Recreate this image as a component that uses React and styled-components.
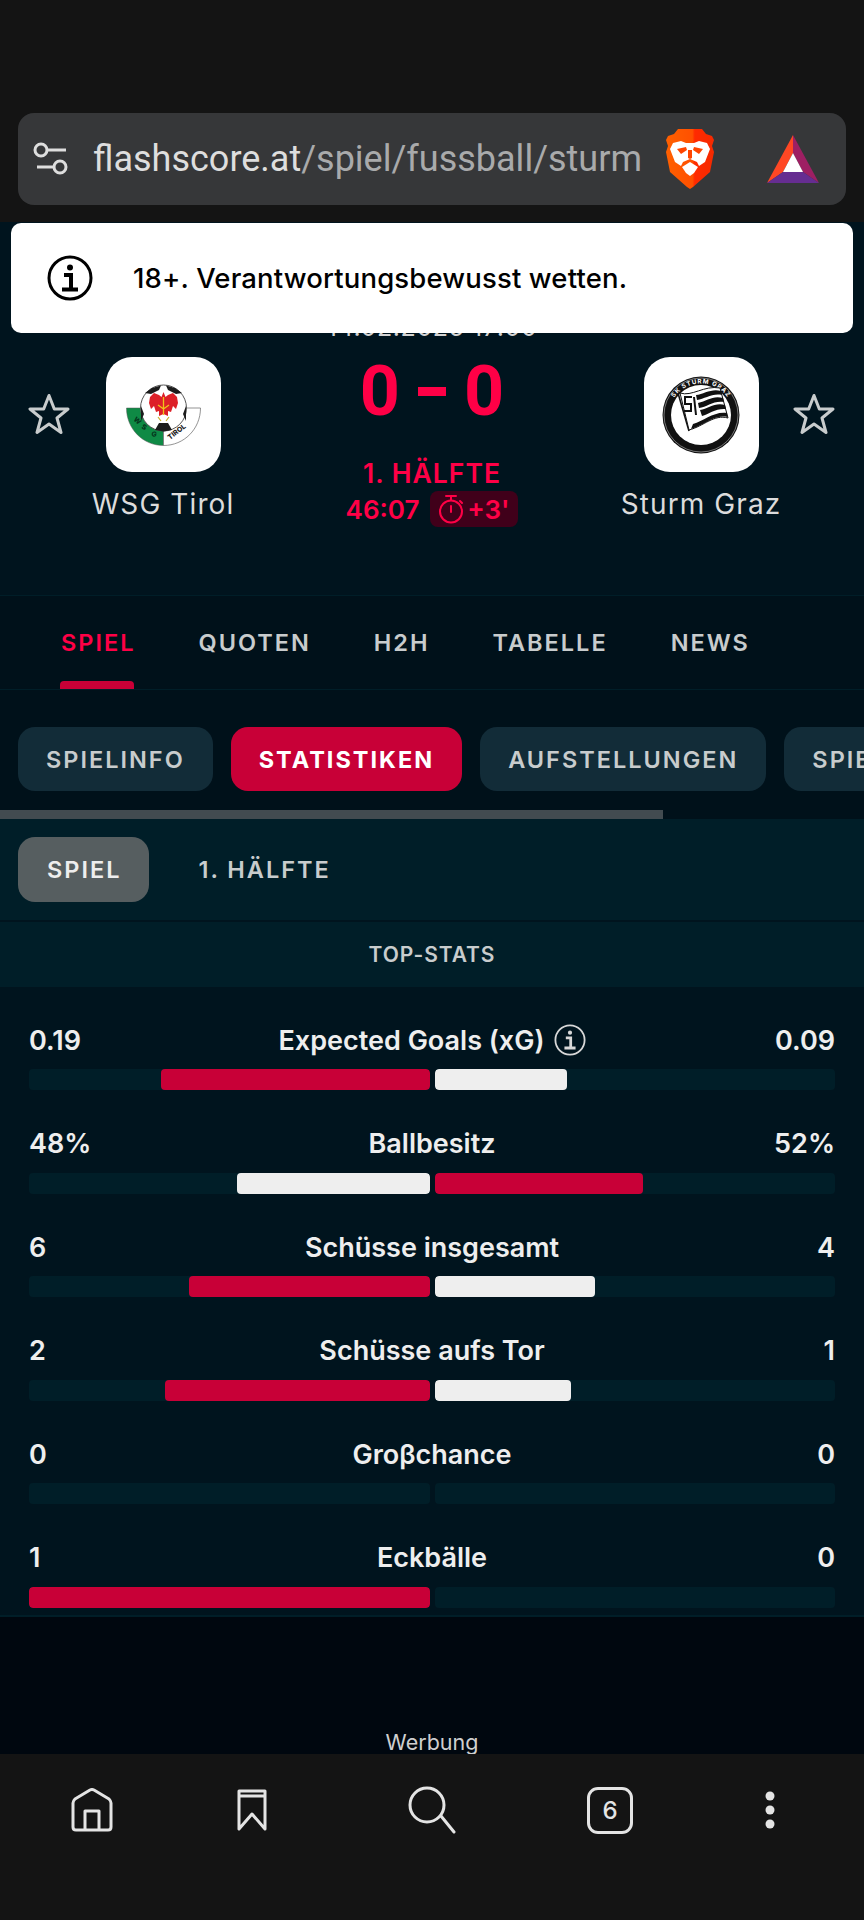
import React from 'react';
import styled, { createGlobalStyle } from 'styled-components';

const GlobalStyle = createGlobalStyle`
  html, body {
    margin: 0;
    padding: 0;
    background: #141414;
  }
  * {
    box-sizing: border-box;
  }
`;

const Screen = styled.div`
  position: relative;
  width: 864px;
  height: 1920px;
  overflow: hidden;
  display: flex;
  flex-direction: column;
  background: #00141e;
  font-family: Inter, "Liberation Sans", sans-serif;
`;

const BrowserTop = styled.header`
  height: 222px;
  flex: none;
  padding: 113px 18px 0;
  background: #141414;
`;

const UrlBar = styled.div`
  height: 92px;
  display: flex;
  align-items: center;
  padding-left: 15px;
  border-radius: 16px;
  background: #363739;
`;

const UrlText = styled.div`
  width: 548px;
  margin-left: 24px;
  overflow: hidden;
  white-space: nowrap;
  font-family: Roboto, sans-serif;
  font-size: 36px;
  color: #a9aaab;
  span {
    color: #dedede;
  }
`;

const Shield = styled.svg`
  margin-left: 25px;
  flex: none;
`;

const Triangle = styled.svg`
  margin-left: 53px;
  flex: none;
`;

const Banner = styled.div`
  position: absolute;
  top: 223px;
  left: 11px;
  width: 842px;
  height: 110px;
  display: flex;
  align-items: center;
  padding-left: 36px;
  gap: 40px;
  border-radius: 10px;
  background: #fff;
  font-size: 27.5px;
  font-weight: 500;
  letter-spacing: 0.15px;
  color: #000;
`;

const MatchHeader = styled.section`
  height: 373px;
  flex: none;
  padding-top: 96px;
`;

const DateLine = styled.div`
  height: 18px;
  line-height: 18px;
  text-align: center;
  font-size: 25px;
  letter-spacing: 0.6px;
  color: #d4d4d4;
`;

const Teams = styled.div`
  display: flex;
  align-items: flex-start;
  margin-top: 21px;
  padding: 0 29px 0 28px;
`;

const StarIcon = styled.svg`
  flex: none;
  margin-top: 36px;
`;

const Team = styled.div`
  width: 160px;
  flex: none;
  margin: ${(p) => (p.$right ? '0 12px 0 0' : '0 0 0 13px')};
  display: flex;
  flex-direction: column;
  align-items: center;
`;

const LogoBox = styled.div`
  width: 115px;
  height: 115px;
  display: flex;
  align-items: center;
  justify-content: center;
  border-radius: 26px;
  background: #fff;
`;

const TeamName = styled.div`
  margin-top: 16px;
  font-size: 28px;
  line-height: 32px;
  letter-spacing: 1.1px;
  white-space: nowrap;
  color: #dcdcdc;
`;

const Center = styled.div`
  flex: 1;
  display: flex;
  flex-direction: column;
  align-items: center;
  color: #ff0046;
`;

const Score = styled.div`
  height: 50px;
  margin-top: 9px;
  display: flex;
  align-items: center;
  gap: 18px;
  font-family: Roboto, sans-serif;
  font-size: 70px;
  font-weight: 700;
  line-height: 50px;
`;

const Dash = styled.span`
  width: 28px;
  height: 9px;
  background: #ff0046;
`;

const Phase = styled.div`
  margin-top: 41px;
  font-size: 26.5px;
  line-height: 32px;
  font-weight: 600;
  letter-spacing: 1px;
`;

const Clock = styled.div`
  margin-top: 2px;
  display: flex;
  align-items: center;
  gap: 11px;
  font-size: 26px;
  font-weight: 600;
`;

const Added = styled.div`
  width: 88px;
  height: 36px;
  display: flex;
  align-items: center;
  justify-content: center;
  gap: 3px;
  border-radius: 8px;
  background: #40001a;
`;

const MatchTabs = styled.nav`
  height: 95px;
  flex: none;
  display: flex;
  gap: 63px;
  padding-left: 61px;
  border-top: 1px solid #001e28;
  border-bottom: 1px solid #001e28;
  background: #00111a;
`;

const MatchTab = styled.div`
  position: relative;
  display: flex;
  align-items: center;
  font-size: 23.5px;
  font-weight: 600;
  letter-spacing: 2px;
  color: ${(p) => (p.$active ? '#ff0046' : '#c8cccd')};
  &::after {
    content: '';
    display: ${(p) => (p.$active ? 'block' : 'none')};
    position: absolute;
    left: -1px;
    right: 1px;
    bottom: 0;
    height: 8px;
    border-radius: 4px 4px 0 0;
    background: #c80037;
  }
`;

const PillSection = styled.div`
  height: 120px;
  flex: none;
  display: flex;
  gap: 18px;
  padding: 37px 0 0 18px;
  overflow: hidden;
  background: #00111a;
`;

const Pill = styled.div`
  height: 64px;
  flex: none;
  display: flex;
  align-items: center;
  padding: 0 28px;
  border-radius: 17px;
  font-size: 23.5px;
  font-weight: ${(p) => (p.$active ? 700 : 600)};
  letter-spacing: 2px;
  color: ${(p) => (p.$active ? '#fff' : '#c8cccd')};
  background: ${(p) => (p.$active ? '#c80037' : '#122c38')};
`;

const ScrollTrack = styled.div`
  height: 9px;
  flex: none;
  background: #00111a;
`;

const ScrollThumb = styled.div`
  width: 663px;
  height: 100%;
  background: #424b50;
`;

const SubTabs = styled.div`
  height: 103px;
  flex: none;
  display: flex;
  align-items: flex-start;
  padding: 18px 0 0 18px;
  border-bottom: 2px solid #00141e;
  background: #001e28;
`;

const SubTab = styled.div`
  height: 65px;
  display: flex;
  align-items: center;
  padding: 0 28px 0 29px;
  margin-right: 20px;
  border-radius: 17px;
  font-size: 23.5px;
  font-weight: 600;
  letter-spacing: 2px;
  color: ${(p) => (p.$active ? '#eeeeee' : '#c8cccd')};
  background: ${(p) => (p.$active ? '#565e60' : 'transparent')};
`;

const StatsHeading = styled.div`
  height: 65px;
  flex: none;
  display: flex;
  align-items: center;
  justify-content: center;
  font-size: 21px;
  font-weight: 600;
  letter-spacing: 0.9px;
  color: #c8cccd;
  background: #001e28;
`;

const StatsList = styled.div`
  height: 630px;
  flex: none;
  padding: 33px 29px 0;
  border-bottom: 2px solid #001e28;
`;

const StatRow = styled.div`
  height: 103.5px;
`;

const StatLabels = styled.div`
  height: 40px;
  display: grid;
  grid-template-columns: 1fr auto 1fr;
  align-items: center;
  font-size: 27px;
  font-weight: 600;
  color: #eeeeee;
`;

const StatTitle = styled.div`
  display: flex;
  align-items: center;
  gap: 9px;
`;

const StatRight = styled.div`
  text-align: right;
`;

const Bars = styled.div`
  height: 21px;
  margin-top: 9px;
  display: flex;
  gap: 5px;
`;

const Track = styled.div`
  flex: 1;
  display: flex;
  justify-content: ${(p) => (p.$left ? 'flex-end' : 'flex-start')};
  border-radius: 4px;
  overflow: hidden;
  background: #001e28;
`;

const Fill = styled.div`
  height: 100%;
  border-radius: 4px;
  background: ${(p) => (p.$lead ? '#c80037' : '#eeeeee')};
`;

const AdSlot = styled.div`
  flex: 1;
  display: flex;
  align-items: flex-end;
  justify-content: center;
  font-size: 21.5px;
  line-height: 24px;
  color: #cfcfcf;
  background: #00070f;
`;

const BottomBar = styled.footer`
  height: 166px;
  flex: none;
  display: grid;
  grid-template-columns: 184px 136px 224px 132px 188px;
  grid-template-rows: 112px;
  align-items: center;
  justify-items: center;
  background: #141414;
`;

const TabCount = styled.div`
  width: 46px;
  height: 47px;
  display: flex;
  align-items: center;
  justify-content: center;
  border: 3px solid #e4e4e4;
  border-radius: 11px;
  font-size: 24px;
  font-weight: 500;
  color: #e4e4e4;
`;

const stats = [
  { title: 'Expected Goals (xG)', left: '0.19', right: '0.09', lw: 67, rw: 33, info: true, leftLeads: true },
  { title: 'Ballbesitz', left: '48%', right: '52%', lw: 48, rw: 52, leftLeads: false },
  { title: 'Schüsse insgesamt', left: '6', right: '4', lw: 60, rw: 40, leftLeads: true },
  { title: 'Schüsse aufs Tor', left: '2', right: '1', lw: 66, rw: 34, leftLeads: true },
  { title: 'Groβchance', left: '0', right: '0', lw: 0, rw: 0, leftLeads: true },
  { title: 'Eckbälle', left: '1', right: '0', lw: 100, rw: 0, leftLeads: true },
];

const FilterIcon = () => (
  <svg width="36" height="34" viewBox="0 0 36 34" fill="none" stroke="#dedede" strokeWidth="3">
    <circle cx="8" cy="8" r="6" />
    <path d="M14 8h19M4 25h17" />
    <circle cx="27" cy="25" r="6" />
  </svg>
);

const BraveLogo = () => (
  <Shield width="48" height="60" viewBox="0 0 48 60">
    <defs>
      <linearGradient id="braveFill" x1="0" x2="1" y1="0" y2="0">
        <stop offset="0" stopColor="#ff6000" />
        <stop offset="0.55" stopColor="#ff5000" />
        <stop offset="0.6" stopColor="#ff2a00" />
        <stop offset="1" stopColor="#f52a00" />
      </linearGradient>
    </defs>
    <path d="M12 0H36L40 5 46 7 48 11 46 17 48 23 44 43 27 58 24 60 21 58 4 43 0 23 2 17 0 11 2 7 8 5Z" fill="url(#braveFill)" />
    <path d="M7 14 15 12 20 14H28L33 12 41 14 44 20 39 33 33 37 31 33 24 30 17 33 15 37 9 33 4 20Z" fill="#fff" />
    <path d="M11 20 20 18 21 21 15 25ZM37 20 28 18 27 21 33 25ZM22 21H26L26 29 24 30 22 29Z" fill="#ff4500" />
    <path d="M16 38 24 33 32 38 28 44 24 47 20 44Z" fill="#fff" />
  </Shield>
);

const BatLogo = () => (
  <Triangle width="52" height="48" viewBox="0 0 52 48">
    <path d="M26 0 0 48 16 37 26 18Z" fill="#ff4724" />
    <path d="M26 0 52 48 36 37 26 18Z" fill="#9e1f63" />
    <path d="M0 48H52L36 37H16Z" fill="#662d91" />
    <path d="M26 18 36 37H16Z" fill="#fff" />
  </Triangle>
);

const InfoIcon = ({ size, color, width }) => (
  <svg width={size} height={size} viewBox="0 0 46 46" fill="none" stroke={color} strokeWidth={width}>
    <circle cx="23" cy="23" r="21" />
    <circle cx="23" cy="12.5" r="3" fill={color} stroke="none" />
    <path d="M17 20h7v14M15 34.5h16" strokeWidth="4" />
  </svg>
);

const Star = () => (
  <StarIcon width="42" height="42" viewBox="0 0 42 42" fill="none" stroke="#c8cccd" strokeWidth="3" strokeLinejoin="round">
    <path d="M21 2.5 26.3 16H40L29 25 33 39.5 21 31 9 39.5 13 25 2 16H15.7Z" />
  </StarIcon>
);

const Stopwatch = () => (
  <svg width="25" height="30" viewBox="0 0 25 30" fill="none" stroke="#ff0046" strokeWidth="2">
    <circle cx="12" cy="17.5" r="11" />
    <path d="M7 2h10M12 2v4M21 7l2 2M12 12v6" strokeLinecap="round" />
  </svg>
);

const TirolLogo = () => (
  <svg width="75" height="62" viewBox="0 0 75 62">
    <path d="M0.5 24H37.5V61.5C17 61.5 0.5 45 0.5 24Z" fill="#0f8a45" stroke="#555" strokeWidth="0.5" />
    <path d="M74.5 24H37.5V61.5C58 61.5 74.5 45 74.5 24Z" fill="#fff" stroke="#666" strokeWidth="0.7" />
    <circle cx="37.5" cy="24" r="23" fill="#fff" stroke="#555" strokeWidth="1" />
    <path d="M26 4 35 1.5 33 6 25 10 19 9ZM49 4 40 1.5 42 6 50 10 56 9ZM15 22 18 30 15 37 15 28ZM60 22 57 30 60 37 60 28ZM29 46 33 39H42L46 46 37.5 47.5Z" fill="#1c1c1c" />
    <path d="M37.5 8 39.5 13 42 11 47 9 51 13 52 19 50 25 47 22 45 28 42 27 42 32 37.5 30 33 32 33 27 30 28 28 22 25 25 23 19 24 13 28 9 33 11 35.5 13Z" fill="#dd2028" />
    <path d="M37.5 13V31M32 21 37.5 25 43 21" stroke="#f0c419" strokeWidth="1.3" fill="none" />
    <path d="M32 33 35 37M43 33 40 37" stroke="#c8b02a" strokeWidth="1.2" />
    <text x="7" y="36" fontSize="7" fontWeight="800" fontFamily="Inter, sans-serif" fill="#04371d" transform="rotate(42 7 36)">W</text>
    <text x="15" y="44" fontSize="7" fontWeight="800" fontFamily="Inter, sans-serif" fill="#04371d" transform="rotate(30 15 44)">S</text>
    <text x="25" y="52" fontSize="7" fontWeight="800" fontFamily="Inter, sans-serif" fill="#04371d" transform="rotate(12 25 52)">G</text>
    <text x="44" y="56" fontSize="7" fontWeight="800" fontFamily="Inter, sans-serif" fill="#222" transform="rotate(-38 44 56)">TIROL</text>
  </svg>
);

const SturmLogo = () => (
  <svg width="78" height="78" viewBox="0 0 78 78">
    <defs>
      <path id="sturmTop" d="M6.5 40A32.5 32.5 0 0 1 71.5 40" />
      <path id="sturmBottom" d="M9 45A31 31 0 0 0 69 45" />
    </defs>
    <circle cx="39" cy="39" r="38.5" fill="#111" />
    <circle cx="39" cy="39" r="37" fill="none" stroke="#ddd" strokeWidth="0.5" />
    <circle cx="39" cy="39" r="30" fill="#fff" />
    <text fontSize="6.2" fontWeight="700" fill="#fff" fontFamily="Inter, sans-serif" letterSpacing="0.9">
      <textPath href="#sturmTop" startOffset="50%" textAnchor="middle">SK STURM GRAZ</textPath>
    </text>
    <text fontSize="6" fontWeight="700" fill="#fff" fontFamily="Inter, sans-serif" letterSpacing="0.7">
      <textPath href="#sturmBottom" startOffset="50%" textAnchor="middle">SEIT 1909</textPath>
    </text>
    <path d="M16 17 27 55" stroke="#111" strokeWidth="1.6" />
    <path d="M18 17C30 21 42 9 58 12L66 42C52 38 42 50 27 54Z" fill="#fff" stroke="#111" strokeWidth="1" />
    <path d="M34 19C42 18 50 12 59 15L60 19C50 17 43 23 35 24ZM36 27C45 25 51 19 61 22L62 26C52 24 45 31 37 32ZM38 34C46 33 53 26 63 29L64 33C54 32 47 38 40 40ZM31 48C42 45 52 35 65 37L65.5 41C52 38 43 49 29 53Z" fill="#111" />
    <path d="M30 21H23V28H29V35H22" fill="none" stroke="#111" strokeWidth="2" />
    <path d="M32 21 34 39" stroke="#111" strokeWidth="2" />
  </svg>
);

const HomeIcon = () => (
  <svg width="44" height="44" viewBox="0 0 44 44" fill="none" stroke="#e4e4e4" strokeWidth="3" strokeLinejoin="round">
    <path d="M3 15 Q3 13 5 11 L20 2 Q22 1 24 2 L39 11 Q41 13 41 15V39Q41 42 38 42H6Q3 42 3 39Z" />
    <path d="M15 42V23H29V42" />
  </svg>
);

const BookmarkIcon = () => (
  <svg width="30" height="44" viewBox="0 0 30 44" fill="none" stroke="#e4e4e4" strokeWidth="3" strokeLinejoin="round">
    <path d="M2 3H28V41L15 26 2 41ZM2 8H28" />
  </svg>
);

const SearchIcon = () => (
  <svg width="48" height="48" viewBox="0 0 48 48" fill="none" stroke="#e4e4e4" strokeWidth="3" strokeLinecap="round">
    <circle cx="19" cy="19" r="17" />
    <path d="M33 30 46 46" />
  </svg>
);

const MenuIcon = () => (
  <svg width="12" height="40" viewBox="0 0 12 40" fill="#e4e4e4">
    <circle cx="6" cy="6" r="4.5" />
    <circle cx="6" cy="20" r="4.5" />
    <circle cx="6" cy="34" r="4.5" />
  </svg>
);

const App = () => {
  return (
    <Screen>
      <GlobalStyle />
      <BrowserTop>
        <UrlBar>
          <FilterIcon />
          <UrlText>
            <span>flashscore.at</span>/spiel/fussball/sturm-graz
          </UrlText>
          <BraveLogo />
          <BatLogo />
        </UrlBar>
      </BrowserTop>

      <MatchHeader>
        <DateLine>14.02.2025 17:00</DateLine>
        <Teams>
          <Star />
          <Team>
            <LogoBox>
              <TirolLogo />
            </LogoBox>
            <TeamName>WSG Tirol</TeamName>
          </Team>
          <Center>
            <Score>
              <span>0</span>
              <Dash />
              <span>0</span>
            </Score>
            <Phase>1. HÄLFTE</Phase>
            <Clock>
              <span>46:07</span>
              <Added>
                <Stopwatch />
                <span>+3'</span>
              </Added>
            </Clock>
          </Center>
          <Team $right>
            <LogoBox>
              <SturmLogo />
            </LogoBox>
            <TeamName>Sturm Graz</TeamName>
          </Team>
          <Star />
        </Teams>
      </MatchHeader>

      <MatchTabs>
        <MatchTab $active>SPIEL</MatchTab>
        <MatchTab>QUOTEN</MatchTab>
        <MatchTab>H2H</MatchTab>
        <MatchTab>TABELLE</MatchTab>
        <MatchTab>NEWS</MatchTab>
      </MatchTabs>

      <PillSection>
        <Pill>SPIELINFO</Pill>
        <Pill $active>STATISTIKEN</Pill>
        <Pill>AUFSTELLUNGEN</Pill>
        <Pill>SPIELVERLAUF</Pill>
      </PillSection>
      <ScrollTrack>
        <ScrollThumb />
      </ScrollTrack>

      <SubTabs>
        <SubTab $active>SPIEL</SubTab>
        <SubTab>1. HÄLFTE</SubTab>
      </SubTabs>
      <StatsHeading>TOP-STATS</StatsHeading>

      <StatsList>
        {stats.map((s) => (
          <StatRow key={s.title}>
            <StatLabels>
              <div>{s.left}</div>
              <StatTitle>
                {s.title}
                {s.info && <InfoIcon size={32} color="#d8d8d8" width={2.6} />}
              </StatTitle>
              <StatRight>{s.right}</StatRight>
            </StatLabels>
            <Bars>
              <Track $left>
                <Fill $lead={s.leftLeads} style={{ width: `${s.lw}%` }} />
              </Track>
              <Track>
                <Fill $lead={!s.leftLeads} style={{ width: `${s.rw}%` }} />
              </Track>
            </Bars>
          </StatRow>
        ))}
      </StatsList>

      <AdSlot>Werbung</AdSlot>

      <BottomBar>
        <HomeIcon />
        <BookmarkIcon />
        <SearchIcon />
        <TabCount>6</TabCount>
        <MenuIcon />
      </BottomBar>

      <Banner>
        <InfoIcon size={46} color="#000" width={3} />
        <span>18+. Verantwortungsbewusst wetten.</span>
      </Banner>
    </Screen>
  );
};

export default App;
